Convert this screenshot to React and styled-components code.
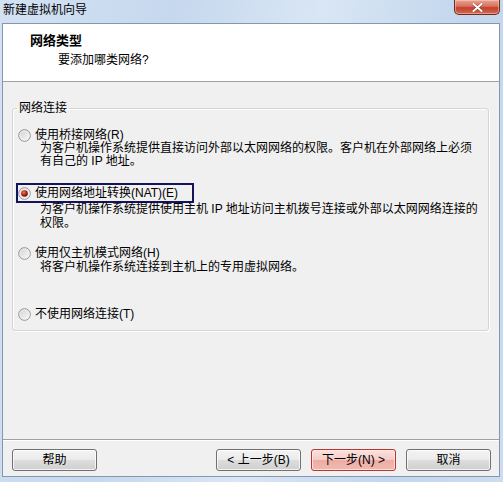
import React from 'react';
import styled, { createGlobalStyle } from 'styled-components';

const Global = createGlobalStyle`
  html, body { margin: 0; padding: 0; }
  body {
    width: 503px; height: 482px; overflow: hidden;
    background: #c4d6ec;
    font-family: "Liberation Sans", "Noto Sans CJK SC", sans-serif;
    font-size: 12px; color: #000;
  }
`;

const Frame = styled.div`
  width: 503px; height: 482px; box-sizing: border-box;
  display: flex; flex-direction: column;
  padding: 0 3px 5px 2px;
  background: linear-gradient(100deg, #d3e2f3 0%, #c6d8ee 30%, #d9e6f4 55%, #c3d6ed 80%, #cddcef 100%);
`;

const TitleBar = styled.div`
  height: 23px; flex-shrink: 0;
  display: flex; align-items: flex-start; justify-content: space-between;
`;

const Title = styled.div`
  padding: 3px 0 0 1px; line-height: 14px; font-size: 12px; color: #000;
`;

const CloseButton = styled.div`
  width: 46px; height: 15px; box-sizing: border-box;
  display: flex; align-items: center; justify-content: center;
  border: 1px solid #6b2a22; border-top: none;
  border-radius: 0 0 5px 5px;
  background: linear-gradient(180deg, #e9a492 0%, #d7705e 45%, #c2402c 55%, #d36a52 100%);
  box-shadow: inset 0 0 0 1px rgba(255, 210, 200, 0.5);
`;

const Client = styled.div`
  flex: 1; display: flex; flex-direction: column;
  border: 1px solid #8397b0;
  background: #f0f0f0;
  min-height: 0;
`;

const Header = styled.div`
  height: 58px; flex-shrink: 0; box-sizing: border-box;
  background: #fff;
  border-bottom: 1px solid #a0a0a0;
  padding: 9px 0 0 27px;
`;

const HeaderTitle = styled.div`
  font-weight: bold; font-size: 13px; line-height: 16px;
`;

const HeaderSub = styled.div`
  margin-top: 3px; padding-left: 28px; line-height: 16px;
`;

const Body = styled.div`
  flex: 1; padding: 0 10px 0 9px;
`;

const Group = styled.fieldset`
  margin: 19px 0 0; padding: 0 0 6px;
  border: 1px solid #d5d5d5; border-radius: 3px;
  box-shadow: inset 1px 1px 0 #fff, 1px 1px 0 #fff;
`;

const GroupLabel = styled.legend`
  margin-left: 4px; padding: 0 2px;
  line-height: 14px; font-size: 12px;
`;

const Option = styled.div`
  display: flex; flex-direction: column;
  margin-top: ${p => p.$top}px;
`;

const LabelRow = styled.div`
  align-self: flex-start;
  display: flex; align-items: center; gap: 4px;
  height: 20px; box-sizing: border-box;
  margin-left: 3px; padding: 0 14px 0 0;
  border: 2px solid ${p => (p.$focused ? '#14145c' : 'transparent')};
  line-height: 16px; white-space: nowrap;
`;

const Desc = styled.div`
  padding-left: 27px; margin-top: ${p => p.$gap}px;
  line-height: 13.5px; white-space: nowrap;
`;

const Footer = styled.div`
  flex-shrink: 0;
  border-top: 1px solid #a0a0a0;
  box-shadow: inset 0 1px 0 #fff;
  padding: 9px 8px 5px 9px;
  display: flex; align-items: center;
`;

const Spacer = styled.div` flex: 1; `;

const Buttons = styled.div` display: flex; gap: 10px; `;

const Button = styled.button`
  width: 85px; height: 22px; padding: 0; margin: 0;
  font-family: inherit; font-size: 12px; line-height: 20px; color: #000;
  border-radius: 3px;
  border: 1px solid ${p => (p.$primary ? '#b7372f' : '#707070')};
  background: ${p => (p.$primary
    ? 'linear-gradient(180deg, #fbe3df 0%, #f6cbc5 48%, #efaca3 52%, #f0b9b1 100%)'
    : 'linear-gradient(180deg, #f3f3f3 0%, #ebebeb 48%, #dddddd 52%, #cfcfcf 100%)')};
  box-shadow: inset 0 0 0 1px ${p => (p.$primary ? 'rgba(255,235,230,0.8)' : 'rgba(255,255,255,0.75)')};
`;

const Radio = ({ checked }) => (
  <svg width="13" height="13" viewBox="0 0 13 13">
    <defs>
      <linearGradient id="rfill" x1="0" y1="0" x2="1" y2="1">
        <stop offset="0" stopColor="#d0d0d0" />
        <stop offset="1" stopColor="#fbfbfb" />
      </linearGradient>
      <radialGradient id="rdot" cx="0.4" cy="0.35" r="0.7">
        <stop offset="0" stopColor="#f07a6a" />
        <stop offset="0.5" stopColor="#b8281c" />
        <stop offset="1" stopColor="#5e0a06" />
      </radialGradient>
    </defs>
    <circle cx="6.5" cy="6.5" r="5.8" fill="url(#rfill)" stroke="#8e8f8f" strokeWidth="1" />
    <circle cx="6.5" cy="6.5" r="4.6" fill="none" stroke="#f4f4f4" strokeWidth="0.8" />
    {checked && <circle cx="6.5" cy="6.5" r="3.3" fill="url(#rdot)" />}
  </svg>
);

const options = [
  { top: 10, label: '使用桥接网络(R)', gap: -3.5,
    desc: ['为客户机操作系统提供直接访问外部以太网网络的权限。客户机在外部网络上必须', '有自己的 IP 地址。'] },
  { top: 14.5, label: '使用网络地址转换(NAT)(E)', gap: 0, checked: true, focused: true,
    desc: ['为客户机操作系统提供使用主机 IP 地址访问主机拨号连接或外部以太网网络连接的', '权限。'] },
  { top: 13, label: '使用仅主机模式网络(H)', gap: -1.75,
    desc: ['将客户机操作系统连接到主机上的专用虚拟网络。'] },
  { top: 29.25, label: '不使用网络连接(T)', gap: 0, desc: [] },
];

export default function App() {
  return (
    <>
      <Global />
      <Frame>
        <TitleBar>
          <Title>新建虚拟机向导</Title>
          <CloseButton>
            <svg width="11" height="9" viewBox="0 0 11 9">
              <path d="M1.5 1 L9.5 8 M9.5 1 L1.5 8" stroke="#5a1810" strokeWidth="3" strokeLinecap="square" opacity="0.5" />
              <path d="M1.5 1 L9.5 8 M9.5 1 L1.5 8" stroke="#ffffff" strokeWidth="2" strokeLinecap="square" />
            </svg>
          </CloseButton>
        </TitleBar>
        <Client>
          <Header>
            <HeaderTitle>网络类型</HeaderTitle>
            <HeaderSub>要添加哪类网络?</HeaderSub>
          </Header>
          <Body>
            <Group>
              <GroupLabel>网络连接</GroupLabel>
              {options.map((o) => (
                <Option key={o.label} $top={o.top}>
                  <LabelRow $focused={o.focused}>
                    <Radio checked={o.checked} />
                    <span>{o.label}</span>
                  </LabelRow>
                  {o.desc.length > 0 && (
                    <Desc $gap={o.gap}>
                      {o.desc.map((line, i) => (
                        <React.Fragment key={i}>{i > 0 && <br />}{line}</React.Fragment>
                      ))}
                    </Desc>
                  )}
                </Option>
              ))}
            </Group>
          </Body>
          <Footer>
            <Button>帮助</Button>
            <Spacer />
            <Buttons>
              <Button>&lt; 上一步(B)</Button>
              <Button $primary>下一步(N) &gt;</Button>
              <Button>取消</Button>
            </Buttons>
          </Footer>
        </Client>
      </Frame>
    </>
  );
}
